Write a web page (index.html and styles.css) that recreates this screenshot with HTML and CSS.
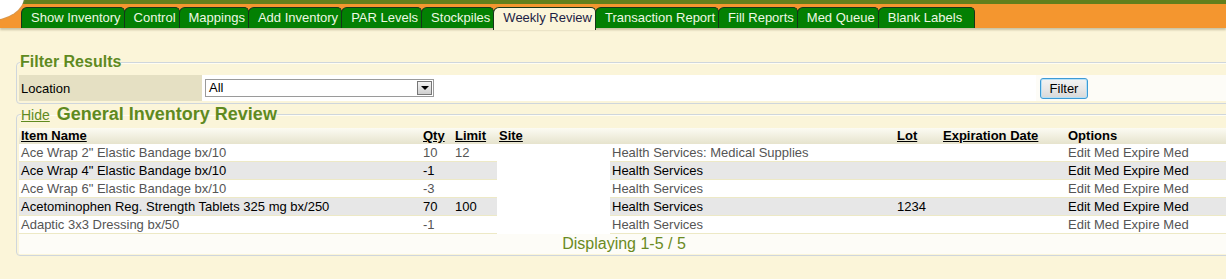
FILE: index.html
```html
<!DOCTYPE html>
<html lang="en">
<head>
  <meta charset="UTF-8" />
  <title>Weekly Review</title>
  <link rel="stylesheet" href="styles.css">
</head>
<body>
  <div class="topbar">
    <div class="logo-corner"></div>
    <ul class="tabs">
      <li><a href="#">Show Inventory</a></li>
      <li><a href="#">Control</a></li>
      <li><a href="#">Mappings</a></li>
      <li><a href="#">Add Inventory</a></li>
      <li><a href="#">PAR Levels</a></li>
      <li><a href="#">Stockpiles</a></li>
      <li class="active"><a href="#">Weekly Review</a></li>
      <li><a href="#">Transaction Report</a></li>
      <li><a href="#">Fill Reports</a></li>
      <li><a href="#">Med Queue</a></li>
      <li class="last"><a href="#">Blank Labels</a></li>
    </ul>
  </div>

  <div class="content">
    <fieldset class="panel filter">
      <legend>Filter Results</legend>
      <table class="filter-table">
        <tr>
          <td class="label">Location</td>
          <td class="field">
            <div class="select">All<span class="arrow"></span></div>
          </td>
          <td class="action"><button class="btn">Filter</button></td>
        </tr>
      </table>
    </fieldset>

    <fieldset class="panel review">
      <legend><a href="#" class="hide">Hide</a> General Inventory Review</legend>
      <table class="grid">
        <colgroup>
          <col style="width:402px">
          <col style="width:32px">
          <col style="width:44px">
          <col style="width:113px">
          <col style="width:285px">
          <col style="width:46px">
          <col style="width:125px">
          <col style="width:163px">
        </colgroup>
        <thead>
          <tr>
            <th><a href="#">Item Name</a></th>
            <th><a href="#">Qty</a></th>
            <th><a href="#">Limit</a></th>
            <th><a href="#">Site</a></th>
            <th></th>
            <th><a href="#">Lot</a></th>
            <th><a href="#">Expiration Date</a></th>
            <th>Options</th>
          </tr>
        </thead>
        <tbody>
          <tr class="odd">
            <td>Ace Wrap 2" Elastic Bandage bx/10</td><td>10</td><td>12</td><td class="site"></td>
            <td>Health Services: Medical Supplies</td><td></td><td></td><td>Edit Med Expire Med</td>
          </tr>
          <tr class="even">
            <td>Ace Wrap 4" Elastic Bandage bx/10</td><td>-1</td><td></td><td class="site"></td>
            <td>Health Services</td><td></td><td></td><td>Edit Med Expire Med</td>
          </tr>
          <tr class="odd">
            <td>Ace Wrap 6" Elastic Bandage bx/10</td><td>-3</td><td></td><td class="site"></td>
            <td>Health Services</td><td></td><td></td><td>Edit Med Expire Med</td>
          </tr>
          <tr class="even">
            <td>Acetominophen Reg. Strength Tablets 325 mg bx/250</td><td>70</td><td>100</td><td class="site"></td>
            <td>Health Services</td><td>1234</td><td></td><td>Edit Med Expire Med</td>
          </tr>
          <tr class="odd">
            <td>Adaptic 3x3 Dressing bx/50</td><td>-1</td><td></td><td class="site"></td>
            <td>Health Services</td><td></td><td></td><td>Edit Med Expire Med</td>
          </tr>
        </tbody>
        <tfoot>
          <tr>
            <td colspan="8">Displaying 1-5 / 5</td>
          </tr>
        </tfoot>
      </table>
    </fieldset>
  </div>
</body>
</html>
```

FILE: styles.css
```css
html, body {
  margin: 0;
  overflow: hidden;
}
body {
  font-family: "Liberation Sans", Arial, sans-serif;
  font-size: 13px;
  background-color: #fbf5d9;
  color: #000;
}

/* header with tabs */
.topbar {
  position: relative;
  height: 24px;
  border-top: 4px solid #627f1c;
  background-color: #f4962f;
  box-shadow: 0 2px 2px #c9c2a2;
}
.logo-corner {
  position: absolute;
  left: -44px;
  top: -30px;
  width: 68px;
  height: 46px;
  border-radius: 50%;
  background: #fff;
  box-shadow: 0 0 2px #a09a88;
}
.tabs {
  list-style: none;
  margin: 0;
  padding: 3px 0 0 21px;
  display: flex;
}
.tabs li {
  height: 20px;
  margin-right: -1px;
  border: 1px solid #15361a;
  border-bottom: none;
  border-radius: 6px 5px 0 0;
  background-color: #038003;
}
.tabs a {
  display: block;
  padding: 0 3px 0 9px;
  line-height: 20px;
  color: #eef8e4;
  text-decoration: none;
}
.tabs li.last a {
  padding-right: 12px;
}
.tabs li.active {
  height: 22px;
  background-color: #fbf5d9;
  position: relative;
  z-index: 1;
}
.tabs li.active a {
  color: #1d1d45;
}

/* panels */
.content {
  padding: 25px 0 0 16px;
}
.panel {
  margin: 0;
  border: 1px solid #cfd6dc;
  border-radius: 4px;
  box-shadow: 0 1px 0 #fffdf2 inset;
}
.panel legend {
  padding: 0;
  font-weight: bold;
  color: #5f8a1f;
}
.filter {
  width: 1230px;
  padding: 4px 2px 2px;
}
.filter legend {
  margin-left: 1px;
  font-size: 16px;
  line-height: 18px;
}
.review {
  width: 1204px;
  padding: 3px 1px 1px 2px;
}
.review legend {
  margin-left: 2px;
  font-size: 18px;
  line-height: 20px;
}
.hide {
  font-size: 14px;
  font-weight: normal;
  color: #5f8a1f;
  margin-right: 2px;
}

/* filter row */
.filter-table {
  border-collapse: collapse;
  width: 1226px;
}
.filter-table td {
  padding: 0;
  height: 26px;
}
.filter-table .label {
  width: 181px;
  padding-left: 2px;
  background-color: #e5e0c3;
}
.filter-table .field {
  width: 834px;
  background-color: #fff;
}
.filter-table .action {
  background-color: #fdfcf7;
}
.select {
  position: relative;
  width: 224px;
  height: 16px;
  margin-left: 3px;
  padding-left: 3px;
  border: 1px solid #9a9a9a;
  line-height: 16px;
  background: #fff;
}
.arrow {
  position: absolute;
  right: 1px;
  top: 1px;
  width: 13px;
  height: 12px;
  border: 1px solid #777;
  background: linear-gradient(#f4f4f4, #cfcfcf);
}
.arrow::after {
  content: "";
  position: absolute;
  left: 3px;
  top: 4px;
  border-left: 4px solid transparent;
  border-right: 4px solid transparent;
  border-top: 4px solid #000;
}
.btn {
  margin-left: 4px;
  width: 48px;
  height: 21px;
  padding: 0;
  font-family: inherit;
  font-size: 13px;
  color: #000;
  border: 1px solid #3c9bd6;
  border-radius: 3px;
  background: linear-gradient(#f3f3f3 0%, #e8e8e8 50%, #d8d8d8 100%);
  box-shadow: 0 0 0 1px #b6e0f6 inset;
}

/* grid */
.grid {
  border-collapse: collapse;
  table-layout: fixed;
  width: 1210px;
}
.grid th {
  height: 16px;
  padding: 0 2px;
  text-align: left;
  line-height: 16px;
  background: linear-gradient(#fcfbf3, #e6e3cd);
  white-space: nowrap;
}
.grid th a {
  color: #000;
}
.grid td {
  height: 17px;
  padding: 0 2px;
  line-height: 17px;
  border-bottom: 1px solid #ede9c6;
  white-space: nowrap;
  overflow: hidden;
}
.grid tr.odd td {
  background-color: #fff;
  color: #555;
}
.grid tr.even td {
  background-color: #e7e7e7;
  color: #000;
}
.grid tr td.site {
  background-color: #fff;
  border-bottom-color: #fff;
}
.grid tfoot td {
  height: 20px;
  line-height: 20px;
  text-align: center;
  font-size: 16px;
  color: #6a8a22;
  background-color: #fdfcf7;
  border-bottom: none;
}
```
